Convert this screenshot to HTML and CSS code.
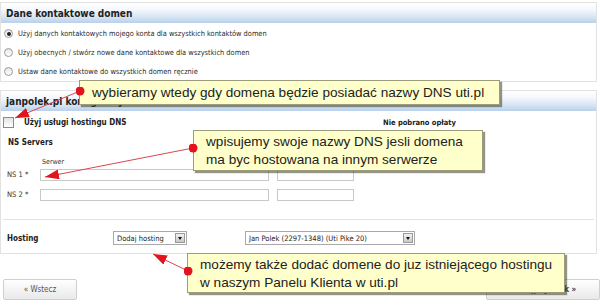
FILE: index.html
```html
<!DOCTYPE html>
<html lang="pl">
  <head>
    <meta charset="UTF-8" />
    <title>Konfiguracja domeny</title>
    <link rel="stylesheet" href="styles.css">
  </head>
  <body>
    <div class="page">
      <!-- Contact data -->
      <section class="box">
        <h2 class="box-head">Dane kontaktowe domen</h2>
        <ul class="choices">
          <li><span class="radio checked"></span>Użyj danych kontaktowych mojego konta dla wszystkich kontaktów domen</li>
          <li><span class="radio"></span>Użyj obecnych / stwórz nowe dane kontaktowe dla wszystkich domen</li>
          <li><span class="radio"></span>Ustaw dane kontaktowe do wszystkich domen ręcznie</li>
        </ul>
      </section>

      <!-- Domain config -->
      <section class="box box-config">
        <h2 class="box-head">janpolek.pl konfiguracja</h2>
        <div class="dns-row">
          <span class="check"><span class="checkbox"></span>Użyj usługi hostingu DNS</span>
          <span class="fee">Nie pobrano opłaty</span>
        </div>
        <h3 class="ns-title">NS Servers</h3>
        <div class="ns-caption">Serwer</div>
        <div class="ns-row">
          <span class="ns-label">NS 1 *</span>
          <span class="field wide"></span>
          <span class="field narrow"></span>
        </div>
        <div class="ns-row">
          <span class="ns-label">NS 2 *</span>
          <span class="field wide"></span>
          <span class="field narrow"></span>
        </div>
        <hr class="sep" />
        <div class="hosting-row">
          <span class="hosting-label">Hosting</span>
          <span class="select select-add">Dodaj hosting<span class="drop"></span></span>
          <span class="select select-plan">Jan Polek (2297-1348) (Uti Pike 20)<span class="drop"></span></span>
        </div>
      </section>

      <div class="nav">
        <span class="btn">« Wstecz</span>
        <span class="btn btn-next">Następny krok »</span>
      </div>

      <!-- Annotations -->
      <div class="callout c1">wybieramy wtedy gdy domena będzie posiadać nazwy DNS uti.pl</div>
      <div class="callout c2">wpisujemy swoje nazwy DNS jesli domena<br />ma byc hostowana na innym serwerze</div>
      <div class="callout c3">możemy także dodać domene do juz istniejącego hostingu<br />w naszym Panelu Klienta w uti.pl</div>

      <svg class="arrows" width="600" height="306" viewBox="0 0 600 306">
        <defs>
          <marker id="head" viewBox="0 0 14 10" refX="14" refY="5" markerWidth="14" markerHeight="10" markerUnits="userSpaceOnUse" orient="auto">
            <path d="M0 0 L14 5 L0 10 Z" fill="#e3141b" />
          </marker>
          <marker id="dot" viewBox="0 0 10 10" refX="5" refY="5" markerWidth="9" markerHeight="9" markerUnits="userSpaceOnUse">
            <circle cx="5" cy="5" r="5" fill="#e3141b" />
          </marker>
        </defs>
        <line x1="80" y1="91" x2="15" y2="118" stroke="#d9474c" stroke-width="1" marker-start="url(#dot)" marker-end="url(#head)" />
        <line x1="193" y1="148" x2="45" y2="177" stroke="#d9474c" stroke-width="1" marker-start="url(#dot)" marker-end="url(#head)" />
        <line x1="188" y1="271" x2="153" y2="254" stroke="#d9474c" stroke-width="1" marker-start="url(#dot)" marker-end="url(#head)" />
      </svg>
    </div>
  </body>
</html>
```

FILE: styles.css
```css
body {
  margin: 0;
  background: #fff;
}

.page {
  position: relative;
  width: 600px;
  height: 306px;
  overflow: hidden;
  padding-top: 2px;
  box-sizing: border-box;
  font-family: "DejaVu Sans Condensed", "DejaVu Sans", sans-serif;
  font-stretch: condensed;
  color: #333;
}

/* Panels */
.box {
  margin-right: 3px;
  border: 1px solid #e2e2e2;
}

.box-head {
  margin: 0;
  height: 20px;
  line-height: 21px;
  padding-left: 5px;
  font-size: 10px;
  font-weight: bold;
  color: #222;
  background: linear-gradient(#ffffff 0%, #f3f7fc 35%, #d7e5f4 70%, #b9d1ea 100%);
}

.choices {
  list-style: none;
  margin: 0;
  padding: 1px 0 0;
}

.choices li {
  display: flex;
  align-items: center;
  height: 19px;
  padding-left: 3px;
  font-size: 7.4px;
  color: #2a2a2a;
}

.radio {
  width: 7px;
  height: 7px;
  margin-right: 5px;
  border: 1px solid #9a9a9a;
  border-radius: 50%;
  background: linear-gradient(#e6e6e6, #fff);
  display: flex;
  align-items: center;
  justify-content: center;
}

.radio.checked::after {
  content: "";
  width: 4px;
  height: 4px;
  border-radius: 50%;
  background: #222;
}

.box-config {
  margin-top: 8px;
  padding-bottom: 8px;
}

/* DNS row */
.dns-row {
  display: flex;
  align-items: center;
  height: 22px;
  padding-left: 2px;
}

.check {
  display: flex;
  align-items: center;
  width: 380px;
  font-size: 8px;
  font-weight: bold;
  color: #222;
}

.checkbox {
  width: 9px;
  height: 9px;
  margin-right: 10px;
  border: 1px solid #8a8a8a;
  background: linear-gradient(#e4e4e4, #fff);
}

.fee {
  font-size: 7.5px;
  font-weight: bold;
  color: #222;
}

.ns-title {
  margin: 0;
  height: 20px;
  line-height: 20px;
  padding-left: 7px;
  font-size: 8px;
  font-weight: bold;
  color: #222;
}

.ns-caption {
  margin-top: 4px;
  padding-left: 41px;
  height: 10px;
  line-height: 10px;
  font-size: 7px;
}

.ns-row {
  display: flex;
  align-items: center;
  gap: 8px;
  height: 13px;
  margin-top: 1px;
  font-size: 7.5px;
}

.ns-row + .ns-row {
  margin-top: 7px;
}

.ns-label {
  width: 33px;
  padding-left: 6px;
  margin-right: -8px;
}

.field {
  height: 10px;
  border: 1px solid #c9c9c9;
  background: #fff;
}

.field.wide {
  width: 227px;
}

.field.narrow {
  width: 75px;
}

.sep {
  margin: 18px 2px 0;
  border: 0;
  border-top: 1px solid #e2e2e2;
}

.hosting-row {
  display: flex;
  align-items: center;
  height: 14px;
  margin-top: 11px;
}

.hosting-label {
  width: 106px;
  padding-left: 6px;
  font-size: 8px;
  font-weight: bold;
  color: #222;
}

.select {
  display: flex;
  align-items: center;
  justify-content: space-between;
  height: 12px;
  padding-left: 3px;
  border: 1px solid #a9a9a9;
  font-size: 7.5px;
  color: #222;
  box-sizing: content-box;
}

.select-add {
  width: 69px;
}

.select-plan {
  width: 165px;
  margin-left: 58px;
}

.drop {
  position: relative;
  width: 10px;
  height: 10px;
  margin-right: 1px;
  background: linear-gradient(#f2f2f2, #c8c8c8);
  border: 1px solid #9a9a9a;
  box-sizing: border-box;
}

.drop::after {
  content: "";
  position: absolute;
  left: 2px;
  top: 3px;
  border-left: 2.5px solid transparent;
  border-right: 2.5px solid transparent;
  border-top: 3px solid #111;
}

/* Buttons */
.nav {
  display: flex;
  justify-content: space-between;
  margin-top: 25px;
  padding-left: 3px;
}

.btn {
  display: flex;
  align-items: center;
  justify-content: center;
  width: 72px;
  height: 19px;
  border: 1px solid #cfcfcf;
  border-radius: 2px;
  background: linear-gradient(#ffffff, #e9e9e9);
  font-size: 8px;
  color: #555;
}

.btn-next {
  width: 112px;
  font-weight: bold;
  color: #444;
}

/* Annotations */
.callout {
  position: absolute;
  box-sizing: border-box;
  padding: 0 0 0 12px;
  white-space: nowrap;
  overflow: hidden;
  background: #ffffcc;
  border: 1px solid #9c9c7a;
  box-shadow: 2px 2px 1px rgba(60, 60, 40, 0.55);
  font-family: "Liberation Sans", Arial, sans-serif;
  font-stretch: normal;
  font-size: 13.6px;
  line-height: 18px;
  color: #222;
}

.c1 {
  left: 79px;
  top: 80px;
  width: 421px;
  height: 25px;
  line-height: 23px;
}

.c2 {
  left: 193px;
  top: 130px;
  width: 290px;
  height: 41px;
  padding-top: 2px;
}

.c3 {
  left: 187px;
  top: 253px;
  width: 378px;
  height: 40px;
  padding-top: 2px;
}

.arrows {
  position: absolute;
  left: 0;
  top: 0;
  pointer-events: none;
}
```
